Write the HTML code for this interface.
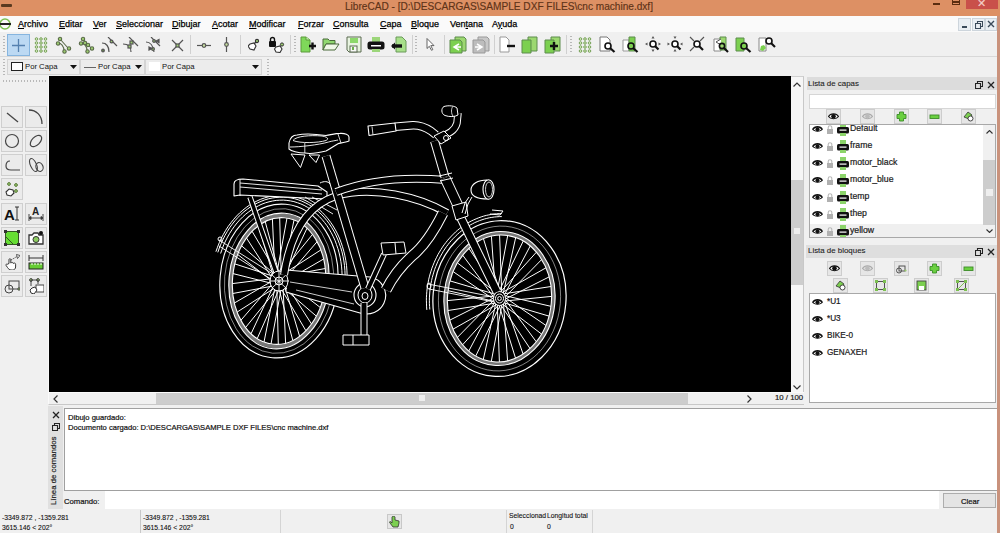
<!DOCTYPE html>
<html><head><meta charset="utf-8">
<style>
*{box-sizing:border-box;margin:0;padding:0}
html,body{width:1000px;height:533px;overflow:hidden;background:#f0f0f0;font-family:"Liberation Sans",sans-serif;color:#000}
.a{position:absolute}
.t{position:absolute;white-space:nowrap;line-height:1;-webkit-text-stroke:0.2px currentColor}
#title{left:0;top:0;width:1000px;height:16px;background:#dd9064}
#menubar{left:0;top:16px;width:997px;height:16px;background:#fafafa}
#tb1{left:0;top:32px;width:997px;height:25px;background:#f0f0f0;border-bottom:1px solid #d8d8d8}
#tb2{left:0;top:57px;width:997px;height:19px;background:#f0f0f0}
#lefttb{left:0;top:76px;width:48px;height:433px;background:#f0f0f0}
#canvas{left:49px;top:76px;width:742px;height:316px;background:#000;overflow:hidden}
#vscroll{left:791px;top:76px;width:13px;height:316px;background:#f6f6f6;border-right:1px solid #c8c8c8;border-top:1px solid #d0d0d0}
#hscroll{left:48px;top:392px;width:756px;height:13px;background:#f0f0f0;border-bottom:1px solid #c8c8c8;border-top:1px solid #fafafa;border-left:1px solid #fafafa}
#dock{left:806px;top:76px;width:191px;height:329px;background:#f0f0f0}
#cmd{left:48px;top:405px;width:949px;height:104px;background:#f0f0f0}
#status{left:0;top:509px;width:997px;height:24px;background:#f0f0f0}
#rborder{left:997px;top:16px;width:3px;height:517px;background:#c9927c}
.menu span{position:absolute;top:4px;font-size:9px;line-height:1;white-space:nowrap;color:#000;-webkit-text-stroke:0.25px #000}
.menu u{text-decoration:underline;text-underline-offset:1px}
.hd{position:absolute;width:2px;background-image:linear-gradient(#b8b8b8 50%,transparent 50%);background-size:2px 3px}
.sep{position:absolute;top:3px;width:1px;height:19px;background:#d0d0d0}
.ic{position:absolute}
.lb{position:absolute;width:22px;height:22px;background:#ebebeb;border:1px solid #cfcfcf}
.db{position:absolute;width:15px;height:15px;background:#e6e6e6;border:1px solid #cdcdcd}
</style></head><body>

<!-- title bar -->
<div id="title" class="a">
  <div class="a" style="left:1px;top:4px;width:11px;height:3px;background:#5a3a20;border-radius:1px"></div>
  <div class="t" style="left:345px;top:2px;font-size:10.1px;color:#5e3318;-webkit-text-stroke:0.15px #5e3318">LibreCAD - [D:\DESCARGAS\SAMPLE DXF FILES\cnc machine.dxf]</div>
  <div class="a" style="left:933px;top:3px;width:7px;height:2px;background:#5a2d10"></div>
  <div class="a" style="left:952px;top:-1px;width:8px;height:6px;border:1.5px solid #5a2d10;border-top:0"></div><div class="a" style="left:952px;top:1px;width:8px;height:1.5px;background:#5a2d10"></div>
  <div class="a" style="left:966px;top:0;width:32px;height:9px;background:#c9504a"></div>
  <div class="t" style="left:977px;top:-2px;font-size:11px;color:#f4d0c8">✕</div>
</div>

<!-- menu bar -->
<div id="menubar" class="a menu">
  <svg class="a" style="left:0;top:1px" width="12" height="14" viewBox="0 0 12 14"><circle cx="5" cy="7" r="5" fill="none" stroke="#7cc050" stroke-width="1.5"/><rect x="0" y="6" width="11" height="2" fill="#222"/></svg>
  <span style="left:18px"><u>A</u>rchivo</span>
  <span style="left:59px"><u>E</u>ditar</span>
  <span style="left:93px"><u>V</u>er</span>
  <span style="left:116px"><u>S</u>eleccionar</span>
  <span style="left:172px"><u>D</u>ibujar</span>
  <span style="left:212px"><u>A</u>cotar</span>
  <span style="left:249px"><u>M</u>odificar</span>
  <span style="left:298px"><u>F</u>orzar</span>
  <span style="left:333px"><u>C</u>onsulta</span>
  <span style="left:380px"><u>C</u>apa</span>
  <span style="left:411px"><u>B</u>loque</span>
  <span style="left:450px">Ven<u>t</u>ana</span>
  <span style="left:492px">A<u>y</u>uda</span>
  <div class="a" style="left:958px;top:2px;width:13px;height:13px;background:#e9eef3;border:1px solid #cdd5dc"></div>
  <div class="a" style="left:962px;top:10px;width:5px;height:2px;background:#3a4a5a"></div>
  <div class="a" style="left:972px;top:2px;width:13px;height:13px;background:#e9eef3;border:1px solid #cdd5dc"></div>
  <svg class="ic" style="left:975px;top:5px" width="8" height="8" viewBox="0 0 8 8"><path d="M2.5 0.5H7.5V5.5H5.5V2.5H2.5Z M0.5 2.5H5.5V7.5H0.5Z" fill="none" stroke="#3a4a5a" stroke-width="1.1"/></svg>
  <div class="a" style="left:985px;top:2px;width:12px;height:13px;background:#e9eef3;border:1px solid #cdd5dc"></div>
  <svg class="ic" style="left:987px;top:4px" width="8" height="8" viewBox="0 0 8 8"><path d="M1 1L7 7M7 1L1 7" stroke="#3a4a5a" stroke-width="1.4"/></svg>
</div>

<div id="tb1" class="a">
  <div class="hd" style="left:3px;top:4px;height:17px"></div>
  <div class="a" style="left:7px;top:2px;width:23px;height:22px;background:#bcd9f3;border:1px solid #86b5df"></div>
  <svg class="ic" style="left:10px;top:5px" width="17" height="17" viewBox="0 0 17 17"><path d="M8.5 2V15M2 8.5H15" stroke="#5581b0" stroke-width="1.3"/></svg>
  <svg class="ic" style="left:33px;top:4px" width="16" height="18" viewBox="0 0 16 18" fill="#d8eec0" stroke="#5f8f3f" stroke-width="0.8"><circle cx="3.5" cy="3" r="1.3"/><circle cx="8" cy="3" r="1.3"/><circle cx="12.5" cy="3" r="1.3"/><circle cx="3.5" cy="7" r="1.3"/><circle cx="8" cy="7" r="1.3"/><circle cx="12.5" cy="7" r="1.3"/><circle cx="3.5" cy="11" r="1.3"/><circle cx="8" cy="11" r="1.3"/><circle cx="12.5" cy="11" r="1.3"/><circle cx="3.5" cy="15" r="1.3"/><circle cx="8" cy="15" r="1.3"/><circle cx="12.5" cy="15" r="1.3"/></svg>
  <svg class="ic" style="left:55px;top:4px" width="18" height="18" viewBox="0 0 18 18" fill="#9ccc70" stroke="#5a6a4a" stroke-width="1.1"><path d="M5 3L13 12M3 7C6 7 9 10 9 15" fill="none"/><circle cx="5" cy="3" r="1.7"/><circle cx="3" cy="7.5" r="1.7"/><circle cx="14" cy="12.5" r="1.7"/><circle cx="9.5" cy="15.5" r="1.7"/></svg>
  <svg class="ic" style="left:78px;top:4px" width="18" height="18" viewBox="0 0 18 18" fill="#9ccc70" stroke="#5a6a4a" stroke-width="1.1"><path d="M5 3L13 12M3 7C6 7 9 10 9 15" fill="none"/><circle cx="5" cy="3" r="1.7"/><circle cx="3" cy="7.5" r="1.7"/><circle cx="7" cy="7" r="1.7"/><circle cx="10" cy="9" r="1.7"/><circle cx="14" cy="12.5" r="1.7"/><circle cx="9.5" cy="15.5" r="1.7"/></svg>
  <svg class="ic" style="left:101px;top:5px" width="18" height="17" viewBox="0 0 18 17" stroke="#555" stroke-width="1.2" fill="none"><path d="M7 0L16 9M1 6C5 6 8 9 8 15"/><circle cx="10.5" cy="4.5" r="1.4" fill="#9ccc70"/><circle cx="2" cy="13.5" r="1.3" fill="#6a8a50"/></svg>
  <svg class="ic" style="left:123px;top:5px" width="18" height="17" viewBox="0 0 18 17" stroke="#555" stroke-width="1.2" fill="none"><path d="M6 0L15 9M0 7C4 7 8 9 8 15"/><rect x="7" y="4" width="3" height="3" fill="#9ccc70"/><rect x="5" y="8" width="3" height="3" fill="#9ccc70"/></svg>
  <svg class="ic" style="left:146px;top:5px" width="18" height="17" viewBox="0 0 18 17" stroke="#555" stroke-width="1.2" fill="none"><path d="M5 0L14 9M0 5C4 5 7 8 8 15"/><circle cx="8" cy="4" r="1.3" fill="#9ccc70"/><circle cx="7" cy="12" r="1.4" fill="#9ccc70"/><path d="M10 4L13 2.5L13 5.5Z M3 10L6 11.5L3 13Z" fill="#444"/></svg>
  <svg class="ic" style="left:171px;top:7px" width="13" height="13" viewBox="0 0 13 13" stroke="#555" stroke-width="1.2" fill="none"><path d="M1 1L12 12M12 1L1 12"/><rect x="5" y="5" width="3" height="3" fill="#9ccc70"/></svg>
  <div class="sep" style="left:190px"></div>
  <svg class="ic" style="left:197px;top:10px" width="15" height="7" viewBox="0 0 15 7" stroke="#555" stroke-width="1.2" fill="none"><path d="M0 3.5H14"/><circle cx="7" cy="3.5" r="1.8" fill="#c8e0a0"/></svg>
  <svg class="ic" style="left:223px;top:5px" width="7" height="15" viewBox="0 0 7 15" stroke="#555" stroke-width="1.2" fill="none"><path d="M3.5 0V15"/><circle cx="3.5" cy="7.5" r="1.8" fill="#c8e0a0"/></svg>
  <div class="sep" style="left:240px"></div>
  <svg class="ic" style="left:248px;top:6px" width="12" height="13" viewBox="0 0 12 13" stroke="#333" stroke-width="1.1" fill="#fff"><path d="M2 6L6 5L8 8L6 12L2 11L0 8Z"/><circle cx="9" cy="3" r="1.6" fill="#9ccc70"/><path d="M6 6L8 4" fill="none"/></svg>
  <svg class="ic" style="left:268px;top:4px" width="17" height="17" viewBox="0 0 17 17"><rect x="1" y="5" width="7" height="6" rx="1" fill="#111"/><path d="M2.5 5V3.5A2 2 0 0 1 6.5 3.5V5" stroke="#111" stroke-width="1.4" fill="none"/><path d="M8 11L12 10L14 13L12 16.5L8 16L6.5 13Z" stroke="#333" stroke-width="1.1" fill="#fff"/><circle cx="14" cy="8.5" r="1.6" fill="#9ccc70" stroke="#333"/></svg>
  <div class="sep" style="left:290px"></div>
  <div class="hd" style="left:294px;top:4px;height:17px"></div>
  <svg class="ic" style="left:300px;top:4px" width="17" height="17" viewBox="0 0 17 17"><path d="M1 1H6L10 4V16H1Z" fill="#7fd85a" stroke="#5c9a3c"/><path d="M6 1V4H10" fill="#c8f0b0" stroke="#5c9a3c"/><path d="M9 10H16M12.5 6.5V13.5" stroke="#111" stroke-width="2.4"/></svg>
  <svg class="ic" style="left:322px;top:5px" width="18" height="15" viewBox="0 0 18 15"><path d="M1 2H6L7.5 3.5H13V7H4L1 13Z" fill="#90d870" stroke="#4a6a3a"/><path d="M1 13L4 7H17L13 13Z" fill="#f0f8e8" stroke="#4a6a3a"/></svg>
  <svg class="ic" style="left:346px;top:4px" width="16" height="17" viewBox="0 0 16 17"><path d="M1 1H15V16H3L1 14Z" fill="#e8f4e0" stroke="#5a6a50"/><rect x="4" y="2" width="8" height="5" fill="#8cd86a"/><rect x="4" y="10" width="7" height="6" fill="#f8f8f8" stroke="#5a6a50"/><rect x="6" y="11" width="2" height="3" fill="#6ab04a"/></svg>
  <svg class="ic" style="left:367px;top:4px" width="18" height="17" viewBox="0 0 18 17"><rect x="5" y="1" width="8" height="5" fill="#9cd67a"/><rect x="0.5" y="5.5" width="17" height="8" rx="2.5" fill="#111"/><rect x="4" y="9" width="10" height="1.5" fill="#fff"/><rect x="5" y="13" width="8" height="3" fill="#9cd67a"/></svg>
  <svg class="ic" style="left:390px;top:4px" width="17" height="17" viewBox="0 0 17 17"><path d="M6 1H12L16 5V16H6Z" fill="#a8e08a" stroke="#6a9a5a"/><path d="M2 10H12" stroke="#111" stroke-width="3.4"/><path d="M1 10L5 6.5V13.5Z" fill="#111"/></svg>
  <div class="sep" style="left:412px"></div>
  <div class="hd" style="left:415px;top:4px;height:17px"></div>
  <svg class="ic" style="left:426px;top:6px" width="9" height="13" viewBox="0 0 9 13"><path d="M1 0.5V10.5L3.3 8.3L5.5 12.3L6.8 11.6L4.8 7.6H8Z" fill="#fff" stroke="#555" stroke-width="0.9"/></svg>
  <div class="sep" style="left:444px"></div>
  <svg class="ic" style="left:449px;top:4px" width="18" height="18" viewBox="0 0 18 18"><path d="M6 1H15L17 3V15H6Z" fill="#9cd870" stroke="#5c8c4c"/><path d="M1 4H11L13 6V17H1Z" fill="#7cd050" stroke="#5c8c4c"/><path d="M10 8L5 11L10 14M5 11H12" stroke="#fff" stroke-width="1.5" fill="none"/></svg>
  <svg class="ic" style="left:472px;top:4px" width="18" height="18" viewBox="0 0 18 18"><path d="M6 1H15L17 3V15H6Z" fill="#c8c8c8" stroke="#999"/><path d="M1 4H11L13 6V17H1Z" fill="#bdbdbd" stroke="#999"/><path d="M5 8L10 11L5 14M3 11H10" stroke="#fff" stroke-width="1.5" fill="none"/></svg>
  <div class="sep" style="left:494px"></div>
  <svg class="ic" style="left:499px;top:4px" width="17" height="17" viewBox="0 0 17 17"><path d="M1 1H7L10 4V16H1Z" fill="#fff" stroke="#999"/><path d="M8 10H16" stroke="#111" stroke-width="2.4"/></svg>
  <svg class="ic" style="left:521px;top:4px" width="18" height="18" viewBox="0 0 18 18"><path d="M7 1H16V15H7Z" fill="#9cd870" stroke="#5c8c4c"/><path d="M1 4H10V17H1Z" fill="#7cd050" stroke="#5c8c4c"/></svg>
  <svg class="ic" style="left:544px;top:4px" width="18" height="18" viewBox="0 0 18 18"><path d="M7 1H16V15H7Z" fill="#9cd870" stroke="#5c8c4c"/><path d="M1 4H10V17H1Z" fill="#7cd050" stroke="#5c8c4c"/><path d="M6 10H14M10 6V14" stroke="#111" stroke-width="2.4"/></svg>
  <div class="sep" style="left:566px"></div>
  <div class="hd" style="left:570px;top:4px;height:17px"></div>
  <svg class="ic" style="left:577px;top:4px" width="16" height="18" viewBox="0 0 16 18" fill="#d8eec0" stroke="#5f8f3f" stroke-width="0.8"><circle cx="3.5" cy="3" r="1.3"/><circle cx="8" cy="3" r="1.3"/><circle cx="12.5" cy="3" r="1.3"/><circle cx="3.5" cy="7" r="1.3"/><circle cx="8" cy="7" r="1.3"/><circle cx="12.5" cy="7" r="1.3"/><circle cx="3.5" cy="11" r="1.3"/><circle cx="8" cy="11" r="1.3"/><circle cx="12.5" cy="11" r="1.3"/><circle cx="3.5" cy="15" r="1.3"/><circle cx="8" cy="15" r="1.3"/><circle cx="12.5" cy="15" r="1.3"/></svg>
  <svg class="ic" style="left:599px;top:4px" width="17" height="17" viewBox="0 0 17 17"><path d="M1 1H8L11 4V15H1Z" fill="#fff" stroke="#777"/><circle cx="9" cy="10" r="3" fill="#fff" stroke="#111" stroke-width="1.6"/><path d="M11 12L15.5 16" stroke="#111" stroke-width="2.2"/></svg>
  <svg class="ic" style="left:622px;top:4px" width="17" height="17" viewBox="0 0 17 17"><path d="M1 4H7V15H1Z" fill="#fff" stroke="#999"/><path d="M7 1H13V15H7Z" fill="#7cd050" stroke="#5c8c4c"/><circle cx="9" cy="10" r="3" fill="#7cd050" stroke="#111" stroke-width="1.6"/><path d="M11 12L15.5 16" stroke="#111" stroke-width="2.2"/></svg>
  <svg class="ic" style="left:645px;top:4px" width="17" height="17" viewBox="0 0 17 17"><circle cx="8" cy="8" r="3" fill="#fff" stroke="#111" stroke-width="1.6"/><path d="M10 10L13.5 13.5" stroke="#111" stroke-width="2.2"/><path d="M8 0L6.5 2.5H9.5Z M8 16L6.5 13.5H9.5Z M0 8L2.5 6.5V9.5Z M16 8L13.5 6.5V9.5Z" fill="#555"/></svg>
  <svg class="ic" style="left:667px;top:4px" width="17" height="17" viewBox="0 0 17 17"><circle cx="8" cy="8" r="3" fill="#fff" stroke="#111" stroke-width="1.6"/><path d="M10 10L13.5 13.5" stroke="#111" stroke-width="2.2"/><path d="M8 3L6.5 0.5H9.5Z M8 13L6.5 15.5H9.5Z M3 8L0.5 6.5V9.5Z M13 8L15.5 6.5V9.5Z" fill="#555"/></svg>
  <svg class="ic" style="left:689px;top:4px" width="17" height="17" viewBox="0 0 17 17"><circle cx="8" cy="8" r="3" fill="#fff" stroke="#111" stroke-width="1.6"/><path d="M10 10L14 14" stroke="#111" stroke-width="2.2"/><path d="M1 1L5 5M15 1L11 5M1 15L5 11" stroke="#555" stroke-width="1.1"/></svg>
  <svg class="ic" style="left:712px;top:4px" width="18" height="17" viewBox="0 0 18 17"><path d="M2 3H9V15H2Z" fill="#fff" stroke="#888"/><path d="M8 1H14V14H8Z" fill="#9cd870" stroke="#5c8c4c"/><path d="M9 3L4 6L9 9" fill="#fff" stroke="#555"/><circle cx="10" cy="10" r="2.6" fill="#9cd870" stroke="#111" stroke-width="1.6"/><path d="M12 12L16 16" stroke="#111" stroke-width="2.2"/></svg>
  <svg class="ic" style="left:735px;top:4px" width="17" height="17" viewBox="0 0 17 17"><path d="M1 2H9V15H1Z" fill="#7cd050" stroke="#5c8c4c"/><circle cx="9" cy="10" r="3" fill="#7cd050" stroke="#111" stroke-width="1.6"/><path d="M11 12L15.5 16" stroke="#111" stroke-width="2.2"/></svg>
  <svg class="ic" style="left:758px;top:3px" width="18" height="18" viewBox="0 0 18 18"><path d="M1 3H8V16H1Z" fill="#fff" stroke="#888"/><circle cx="11" cy="6" r="3" fill="#fff" stroke="#111" stroke-width="1.6"/><path d="M13 8L17 12" stroke="#111" stroke-width="2.2"/><path d="M3 11L6 10L8 13L5 16L2 15Z" fill="#7cd050"/></svg>
</div>
<div id="tb2" class="a">
  <div class="hd" style="left:3px;top:2px;height:16px"></div>
  <div class="a" style="left:7px;top:2px;width:73px;height:16px;background:#ececec;border:1px solid #d4d4d4"></div>
  <div class="a" style="left:11px;top:5px;width:12px;height:9px;background:#fff;border:1px solid #222"></div>
  <div class="t" style="left:25px;top:6px;font-size:7.7px;color:#111;-webkit-text-stroke:0">Por Capa</div>
  <svg class="ic" style="left:70px;top:8px" width="7" height="4" viewBox="0 0 7 4"><path d="M0 0H7L3.5 4Z" fill="#111"/></svg>
  <div class="a" style="left:80px;top:2px;width:65px;height:16px;background:#ececec;border:1px solid #d4d4d4"></div>
  <div class="a" style="left:84px;top:10px;width:12px;height:1px;background:#666"></div>
  <div class="t" style="left:98px;top:6px;font-size:7.7px;color:#111;-webkit-text-stroke:0">Por Capa</div>
  <svg class="ic" style="left:135px;top:8px" width="7" height="4" viewBox="0 0 7 4"><path d="M0 0H7L3.5 4Z" fill="#111"/></svg>
  <div class="a" style="left:145px;top:2px;width:117px;height:16px;background:#ececec;border:1px solid #d4d4d4"></div>
  <div class="a" style="left:149px;top:5px;width:11px;height:9px;background:#fff"></div>
  <div class="t" style="left:162px;top:6px;font-size:7.7px;color:#111;-webkit-text-stroke:0">Por Capa</div>
  <svg class="ic" style="left:252px;top:8px" width="7" height="4" viewBox="0 0 7 4"><path d="M0 0H7L3.5 4Z" fill="#111"/></svg>
  <div class="hd" style="left:267px;top:2px;height:16px"></div>
</div>
<div id="lefttb" class="a"><div class="hd" style="left:3px;top:4px;width:44px;height:2px;background-image:linear-gradient(90deg,#b8b8b8 50%,transparent 50%);background-size:3px 2px"></div><div class="lb" style="left:1px;top:30px"></div><svg class="ic" style="left:4px;top:33px" width="16" height="16" viewBox="0 0 16 16"><path d="M3 4L14 13" stroke="#444" stroke-width="1.3"/></svg><div class="lb" style="left:25px;top:30px"></div><svg class="ic" style="left:28px;top:33px" width="16" height="16" viewBox="0 0 16 16"><path d="M1 1C8 1 14 6 14 15" stroke="#444" stroke-width="1.3" fill="none"/></svg><div class="lb" style="left:1px;top:54px"></div><svg class="ic" style="left:4px;top:57px" width="16" height="16" viewBox="0 0 16 16"><circle cx="8" cy="8" r="6.5" stroke="#444" stroke-width="1.2" fill="none"/></svg><div class="lb" style="left:25px;top:54px"></div><svg class="ic" style="left:28px;top:57px" width="16" height="16" viewBox="0 0 16 16"><ellipse cx="8" cy="8" rx="7" ry="4" transform="rotate(-45 8 8)" stroke="#444" stroke-width="1.2" fill="none"/></svg><div class="lb" style="left:1px;top:78px"></div><svg class="ic" style="left:4px;top:81px" width="16" height="16" viewBox="0 0 16 16"><path d="M6 4C3 4 2 6 2 9C2 12 4 13 7 13H16" stroke="#444" stroke-width="1.2" fill="none"/></svg><div class="lb" style="left:25px;top:78px"></div><svg class="ic" style="left:28px;top:81px" width="16" height="16" viewBox="0 0 16 16"><ellipse cx="5.5" cy="8" rx="3" ry="7" transform="rotate(-25 5.5 8)" stroke="#444" stroke-width="1.1" fill="none"/><ellipse cx="11.5" cy="10" rx="3.5" ry="4.5" transform="rotate(-20 11.5 10)" stroke="#444" stroke-width="1.1" fill="none"/></svg><div class="lb" style="left:1px;top:102px"></div><svg class="ic" style="left:4px;top:105px" width="16" height="16" viewBox="0 0 16 16"><circle cx="5" cy="3" r="1.4" fill="#9ccc70" stroke="#5a7a3a"/><circle cx="12" cy="4" r="1.4" fill="#9ccc70" stroke="#5a7a3a"/><circle cx="12" cy="10" r="1.4" fill="#9ccc70" stroke="#5a7a3a"/><path d="M5 8L9 9L10 12L7 15L3 14L2 11Z" fill="#fff" stroke="#333" stroke-width="1.1"/></svg><div class="lb" style="left:1px;top:127px"></div><svg class="ic" style="left:4px;top:130px" width="16" height="16" viewBox="0 0 16 16"><text x="0" y="14" font-family="Liberation Sans" font-weight="bold" font-size="15" fill="#111">A</text><path d="M11 1H15M13 1V14M11 14H15" stroke="#333" stroke-width="1"/></svg><div class="lb" style="left:25px;top:127px"></div><svg class="ic" style="left:28px;top:130px" width="16" height="16" viewBox="0 0 16 16"><text x="4" y="9" font-family="Liberation Sans" font-weight="bold" font-size="10" fill="#222">A</text><path d="M1 8V15M15 8V15M1 12H15M1 12L3 10.5V13.5ZM15 12L13 10.5V13.5Z" stroke="#444" stroke-width="1"/></svg><div class="lb" style="left:1px;top:151px"></div><svg class="ic" style="left:4px;top:154px" width="16" height="16" viewBox="0 0 16 16"><rect x="1.5" y="1.5" width="13" height="13" fill="#66dd33" stroke="#335522"/><path d="M1 6L10 15" stroke="#335522"/><rect x="0" y="0" width="3" height="3" fill="#333"/><rect x="13" y="0" width="3" height="3" fill="#333"/><rect x="0" y="13" width="3" height="3" fill="#333"/><rect x="13" y="13" width="3" height="3" fill="#333"/></svg><div class="lb" style="left:25px;top:151px"></div><svg class="ic" style="left:28px;top:154px" width="16" height="16" viewBox="0 0 16 16"><path d="M1 5H4L6 3H10L11 5H15V14H1Z" fill="#fff" stroke="#333" stroke-width="1.3"/><circle cx="8" cy="9.5" r="3" fill="#8ccc60" stroke="#333"/><circle cx="13" cy="3" r="2" fill="#111"/></svg><div class="lb" style="left:1px;top:175px"></div><svg class="ic" style="left:4px;top:178px" width="16" height="16" viewBox="0 0 16 16"><path d="M5 9.5V5.5C5 4.5 6.8 4.5 6.8 5.5V9L7.5 8.6C8.3 8.2 9.2 8.6 9.2 9.4L10 9.1C10.8 8.8 11.6 9.4 11.6 10.2V13C11.6 15 10 16 8.5 16H7C5.5 16 4.5 15 3.5 13.5L2 11.3C1.6 10.6 2.4 9.8 3.2 10.3Z" fill="#fff" stroke="#333" stroke-width="1"/><path d="M7 6L13 2.5" stroke="#555" stroke-dasharray="1.5 1"/><path d="M12.5 0.5L16 1.5L13.5 4.5Z" fill="#fff" stroke="#333" stroke-width=".8"/></svg><div class="lb" style="left:25px;top:175px"></div><svg class="ic" style="left:28px;top:178px" width="16" height="16" viewBox="0 0 16 16"><path d="M1 1V7M15 1V7M1 4H15" stroke="#333"/><rect x="1" y="9" width="14" height="6" fill="#66cc33" stroke="#222"/><path d="M4 9V11M7 9V11M10 9V11M13 9V11" stroke="#fff"/></svg><div class="lb" style="left:1px;top:199px"></div><svg class="ic" style="left:4px;top:202px" width="16" height="16" viewBox="0 0 16 16"><rect x="5" y="3" width="10" height="8" fill="none" stroke="#444"/><circle cx="5" cy="11" r="4" fill="none" stroke="#444"/><circle cx="15" cy="11" r="1.2" fill="#9ccc70" stroke="#444"/></svg><div class="lb" style="left:25px;top:199px"></div><svg class="ic" style="left:28px;top:202px" width="16" height="16" viewBox="0 0 16 16"><circle cx="3" cy="2" r="1.4" fill="#9ccc70" stroke="#444"/><circle cx="10" cy="2" r="1.4" fill="#9ccc70" stroke="#444"/><path d="M3 2V8M3 2H10V6" stroke="#444" fill="none"/><rect x="8" y="7" width="8" height="7" fill="#fff" stroke="#444"/><path d="M4 10L7 9L9 12L6 16L3 15L2 12Z" fill="#fff" stroke="#333"/></svg></div>
<div class="a" style="left:48px;top:76px;width:1px;height:316px;background:#f8f8f8"></div><div id="canvas" class="a"><svg width="742" height="316" viewBox="49 76 742 316"><!--BIKE--><g stroke="#fff" fill="none" stroke-linejoin="round"><ellipse cx="279" cy="281" rx="59" ry="77" transform="rotate(5 279 281)" stroke-width="1.1" fill="none"/><ellipse cx="279" cy="281" rx="54.5" ry="72.5" transform="rotate(5 279 281)" stroke-width="0.5" fill="none"/><ellipse cx="279" cy="281" rx="48.25" ry="65.75" transform="rotate(5 279 281)" stroke="#777" stroke-width="3.5" fill="none"/><ellipse cx="279" cy="281" rx="50" ry="68" transform="rotate(5 279 281)" stroke-width="1.1" fill="none"/><ellipse cx="279" cy="281" rx="46.5" ry="63.5" transform="rotate(5 279 281)" stroke-width="1.1" fill="none"/><path d="M285.0 281.4L323.6 259.0M284.9 282.5L311.5 324.0M284.6 283.5L325.6 278.4M284.2 284.5L299.6 336.3M283.7 285.4L323.2 298.1M283.0 286.2L285.6 343.2M282.3 286.9L316.3 316.1M281.4 287.4L271.0 344.0M280.6 287.8L305.9 330.7M279.6 288.0L257.2 338.6M278.7 288.0L292.8 340.4M277.8 287.8L245.5 327.6M276.8 287.5L278.3 344.3M276.0 287.1L237.1 312.1M275.2 286.4L264.0 342.0M274.5 285.7L232.8 293.5M274.0 284.8L251.0 333.8M273.5 283.8L233.0 273.6M273.2 282.8L240.9 320.3M273.0 281.7L237.7 254.5M273.0 280.6L234.4 303.0M273.1 279.5L246.5 238.0M273.4 278.5L232.4 283.6M273.8 277.5L258.4 225.7M274.3 276.6L234.8 263.9M275.0 275.8L272.4 218.8M275.7 275.1L241.7 245.9M276.6 274.6L287.0 218.0M277.4 274.2L252.1 231.3M278.4 274.0L300.8 223.4M279.3 274.0L265.2 221.6M280.2 274.2L312.5 234.4M281.2 274.5L279.7 217.7M282.0 274.9L320.9 249.9M282.8 275.6L294.0 220.0M283.5 276.3L325.2 268.5M284.0 277.2L307.0 228.2M284.5 278.2L325.0 288.4M284.8 279.2L317.1 241.7M285.0 280.3L320.3 307.5" stroke-width="1.0" fill="none" /><ellipse cx="279" cy="281" rx="6" ry="7" transform="rotate(0 279 281)" stroke-width="1" fill="#000"/><ellipse cx="279" cy="281" rx="4" ry="4.5" transform="rotate(0 279 281)" stroke-width="1" fill="none"/><ellipse cx="279" cy="281" rx="1.8" ry="2" transform="rotate(0 279 281)" stroke-width="1" fill="none"/><path d="M220.6 253.5 L222.1 249.2 L223.7 245.0 L225.5 241.0 L227.5 237.1 L229.7 233.3 L232.0 229.7 L234.5 226.2 L237.1 222.9 L239.8 219.8 L242.7 216.9 L245.7 214.2 L248.8 211.8 L252.0 209.5 L255.3 207.5 L258.6 205.7 L262.0 204.1 L265.5 202.8 L269.0 201.8 L272.6 201.0 L276.2 200.4 L279.7 200.2 L283.3 200.1 L286.9 200.4 L290.4 200.9 L293.9 201.6 L297.4 202.7 L300.8 203.9 L304.1 205.4 L307.3 207.2 L310.5 209.2 L313.6 211.4 L316.5 213.9 L319.3 216.5 L322.0 219.4 L324.6 222.5 L327.0 225.7 L329.2 229.2 L331.3 232.8 L333.2 236.5 L335.0 240.4 L336.5 244.5 L337.9 248.6 L339.1 252.9 L340.1 257.2 L340.9 261.6 L341.5 266.1 L341.9 270.6 L342.1 275.2" stroke-width="1" fill="none" /><path d="M217.8 252.4 L219.3 248.0 L221.1 243.7 L223.0 239.5 L225.0 235.4 L227.3 231.5 L229.7 227.7 L232.3 224.1 L235.0 220.7 L237.9 217.5 L240.9 214.5 L244.0 211.7 L247.3 209.2 L250.6 206.8 L254.1 204.7 L257.6 202.9 L261.2 201.3 L264.8 199.9 L268.5 198.8 L272.2 198.0 L275.9 197.5 L279.7 197.2 L283.4 197.1 L287.2 197.4 L290.9 197.9 L294.6 198.7 L298.2 199.8 L301.7 201.1 L305.2 202.7 L308.6 204.5 L311.9 206.6 L315.1 208.9 L318.2 211.4 L321.2 214.2 L324.0 217.2 L326.7 220.3 L329.2 223.7 L331.6 227.3 L333.8 231.0 L335.8 234.9 L337.6 239.0 L339.2 243.2 L340.7 247.5 L342.0 251.9 L343.0 256.4 L343.9 261.0 L344.5 265.6 L344.9 270.3 L345.1 275.1" stroke-width="1" fill="none" /><path d="M215.9 251.7 L217.5 247.2 L219.3 242.7 L221.2 238.4 L223.4 234.3 L225.7 230.3 L228.2 226.4 L230.9 222.8 L233.7 219.3 L236.6 216.0 L239.7 212.9 L242.9 210.1 L246.3 207.4 L249.7 205.0 L253.3 202.9 L256.9 201.0 L260.6 199.3 L264.3 198.0 L268.1 196.9 L272.0 196.0 L275.8 195.5 L279.7 195.2 L283.5 195.2 L287.4 195.4 L291.2 195.9 L295.0 196.8 L298.7 197.8 L302.4 199.2 L306.0 200.8 L309.5 202.7 L312.9 204.8 L316.2 207.2 L319.4 209.8 L322.4 212.6 L325.3 215.7 L328.1 218.9 L330.7 222.4 L333.1 226.0 L335.4 229.9 L337.5 233.9 L339.4 238.0 L341.0 242.3 L342.5 246.7 L343.8 251.2 L344.9 255.8 L345.8 260.5 L346.5 265.3 L346.9 270.1 L347.1 274.9" stroke-width="1" fill="none" /><path d="M219 240 L276 276 M219 246 L274 281" stroke-width="0.9" fill="none" /><ellipse cx="220" cy="239" rx="2" ry="2" transform="rotate(0 220 239)" stroke-width="1" fill="none"/><path d="M234 184 C234 180 238 179 243 179 L318 186 L327 192 L327 199 L240 195 L234 196 Z" stroke-width="1.1" fill="#000" /><path d="M240 183 L322 190 M240 187 L322 194 M240 179 L240 196" stroke-width="0.9" fill="none" /><path d="M250 197 L276 272" stroke-width="5.5" stroke-linecap="butt"/><path d="M250 197 L276 272" stroke-width="3.5" stroke="#000" stroke-linecap="butt"/><path d="M305 197 L333 214 M312 197 L337 210" stroke-width="0.9" fill="none" /><path d="M286 270 L370 277 C382 279 389 292 384 303 C380 312 370 316 360 313 L300 296 L286 292 Z" stroke-width="1.1" fill="#000" /><path d="M290 282 L352 292 M296 290 L354 304" stroke-width="0.8" fill="none" /><ellipse cx="279" cy="281" rx="9" ry="10" transform="rotate(0 279 281)" stroke-width="1" fill="#000"/><path d="M271 274 L287 289 M272 288 L288 273 M279 271 V291 M269 281 H289" stroke-width="0.9" fill="none" /><ellipse cx="279" cy="281" rx="4" ry="4" transform="rotate(0 279 281)" stroke-width="1" fill="none"/><ellipse cx="365" cy="295" rx="11" ry="12" transform="rotate(0 365 295)" stroke-width="1.1" fill="#000"/><ellipse cx="365" cy="295" rx="7" ry="8" transform="rotate(0 365 295)" stroke-width="1" fill="none"/><ellipse cx="365" cy="296" rx="3" ry="3.5" transform="rotate(0 365 296)" stroke-width="1" fill="none"/><path d="M447 213 C420 197 372 185 336 196 C306 206 290 235 284 275" stroke-width="8.0" stroke-linecap="butt"/><path d="M447 213 C420 197 372 185 336 196 C306 206 290 235 284 275" stroke-width="6" stroke="#000" stroke-linecap="butt"/><path d="M326 156 L365 288" stroke-width="9.0" stroke-linecap="butt"/><path d="M326 156 L365 288" stroke-width="7" stroke="#000" stroke-linecap="butt"/><path d="M320 183 C324 181 328 181 330 184" stroke-width="1" fill="none" /><path d="M336 192 C365 181 400 176 446 180" stroke-width="8.0" stroke-linecap="butt"/><path d="M336 192 C365 181 400 176 446 180" stroke-width="6" stroke="#000" stroke-linecap="butt"/><path d="M443 213 C432 235 422 248 412 256 C400 267 392 278 386 290" stroke-width="11.0" stroke-linecap="butt"/><path d="M443 213 C432 235 422 248 412 256 C400 267 392 278 386 290" stroke-width="9" stroke="#000" stroke-linecap="butt"/><path d="M368 289 L384 254" stroke-width="6.0" stroke-linecap="butt"/><path d="M368 289 L384 254" stroke-width="4" stroke="#000" stroke-linecap="butt"/><path d="M381 243 L404 242 L406 253 L383 255 Z M395 243 L396 254" stroke-width="1" fill="#000" /><path d="M364 303 L364 337" stroke-width="7.0" stroke-linecap="butt"/><path d="M364 303 L364 337" stroke-width="5" stroke="#000" stroke-linecap="butt"/><path d="M343 335 L369 335 L369 345 L343 345 Z M353 335 L353 345" stroke-width="1" fill="#000" /><ellipse cx="499.5" cy="298.5" rx="66.5" ry="78" transform="rotate(5 499.5 298.5)" stroke-width="1.2" fill="none"/><ellipse cx="499.5" cy="298.5" rx="61.0" ry="72.5" transform="rotate(5 499.5 298.5)" stroke-width="0.5" fill="none"/><ellipse cx="499.5" cy="298.5" rx="53.75" ry="65.25" transform="rotate(5 499.5 298.5)" stroke="#777" stroke-width="3.5" fill="none"/><ellipse cx="499.5" cy="298.5" rx="55.5" ry="67" transform="rotate(5 499.5 298.5)" stroke-width="1.1" fill="none"/><ellipse cx="499.5" cy="298.5" rx="52" ry="63.5" transform="rotate(5 499.5 298.5)" stroke-width="1.1" fill="none"/><path d="M505.5 298.9L549.1 276.9M505.4 300.0L536.3 341.8M505.1 301.0L551.6 296.4M504.7 302.0L523.1 354.0M504.2 302.9L549.0 316.1M503.5 303.7L507.6 360.8M502.8 304.4L541.6 334.1M501.9 304.9L491.3 361.4M501.1 305.3L530.0 348.5M500.1 305.5L475.8 355.9M499.2 305.5L515.5 358.1M498.3 305.3L462.6 344.8M497.3 305.0L499.4 361.9M496.5 304.6L453.0 329.2M495.7 303.9L483.3 359.4M495.0 303.2L448.0 310.5M494.5 302.3L468.8 351.0M494.0 301.3L448.1 290.7M493.7 300.3L457.3 337.5M493.5 299.2L453.1 271.6M493.5 298.1L449.9 320.1M493.6 297.0L462.7 255.2M493.9 296.0L447.4 300.6M494.3 295.0L475.9 243.0M494.8 294.1L450.0 280.9M495.5 293.3L491.4 236.2M496.2 292.6L457.4 262.9M497.1 292.1L507.7 235.6M497.9 291.7L469.0 248.5M498.9 291.5L523.2 241.1M499.8 291.5L483.5 238.9M500.7 291.7L536.4 252.2M501.7 292.0L499.6 235.1M502.5 292.4L546.0 267.8M503.3 293.1L515.7 237.6M504.0 293.8L551.0 286.5M504.5 294.7L530.2 246.0M505.0 295.7L550.9 306.3M505.3 296.7L541.7 259.5M505.5 297.8L545.9 325.4" stroke-width="1.0" fill="none" /><ellipse cx="499.5" cy="298.5" rx="6" ry="7" transform="rotate(0 499.5 298.5)" stroke-width="1" fill="#000"/><ellipse cx="499.5" cy="298.5" rx="4" ry="4.5" transform="rotate(0 499.5 298.5)" stroke-width="1" fill="none"/><ellipse cx="499.5" cy="298.5" rx="1.8" ry="2" transform="rotate(0 499.5 298.5)" stroke-width="1" fill="none"/><path d="M429.8 309.5 L429.6 306.6 L429.4 303.7 L429.4 300.8 L429.4 297.9 L429.6 295.0 L429.8 292.0 L430.1 289.1 L430.5 286.2 L431.0 283.4 L431.6 280.5 L432.2 277.7 L433.0 274.9 L433.8 272.1 L434.7 269.3 L435.7 266.6 L436.8 264.0 L437.9 261.3 L439.2 258.8 L440.5 256.2 L441.9 253.8 L443.3 251.3 L444.8 249.0 L446.4 246.7 L448.1 244.5 L449.8 242.3 L451.6 240.2 L453.5 238.2 L455.4 236.3 L457.4 234.4 L459.4 232.6 L461.5 230.9 L463.6 229.3 L465.8 227.8 L468.0 226.4 L470.2 225.0 L472.5 223.8 L474.8 222.6 L477.2 221.6 L479.6 220.6 L482.0 219.8 L484.4 219.0 L486.8 218.4 L489.3 217.8 L491.8 217.4 L494.3 217.0 L496.8 216.8 L499.3 216.6 L501.8 216.6" stroke-width="1" fill="none" /><path d="M426.8 309.9 L426.6 306.9 L426.5 303.9 L426.4 300.8 L426.4 297.8 L426.6 294.8 L426.8 291.8 L427.1 288.8 L427.5 285.8 L428.1 282.8 L428.6 279.8 L429.3 276.9 L430.1 274.0 L431.0 271.1 L431.9 268.2 L433.0 265.4 L434.1 262.7 L435.3 259.9 L436.6 257.3 L437.9 254.7 L439.4 252.1 L440.9 249.6 L442.5 247.1 L444.1 244.8 L445.9 242.5 L447.7 240.2 L449.6 238.1 L451.5 236.0 L453.5 234.0 L455.5 232.0 L457.6 230.2 L459.8 228.4 L462.0 226.8 L464.3 225.2 L466.6 223.7 L468.9 222.3 L471.3 221.0 L473.7 219.9 L476.2 218.8 L478.7 217.8 L481.2 216.9 L483.7 216.1 L486.3 215.4 L488.8 214.9 L491.4 214.4 L494.0 214.0 L496.6 213.8 L499.2 213.6 L501.8 213.6" stroke-width="1" fill="none" /><path d="M490 214 L500 215 L503 211 L492 210" stroke-width="1" fill="none" /><path d="M428 284 L494 297 M429 289 L494 302" stroke-width="0.9" fill="none" /><ellipse cx="429" cy="286" rx="2" ry="3" transform="rotate(0 429 286)" stroke-width="1" fill="none"/><path d="M459 214 L497 292" stroke-width="9.0" stroke-linecap="butt"/><path d="M459 214 L497 292" stroke-width="7" stroke="#000" stroke-linecap="butt"/><path d="M434.5 141 L445 177" stroke-width="9.0" stroke-linecap="butt"/><path d="M434.5 141 L445 177" stroke-width="7" stroke="#000" stroke-linecap="butt"/><path d="M445 178 L459.5 209" stroke-width="11.0" stroke-linecap="butt"/><path d="M445 178 L459.5 209" stroke-width="9" stroke="#000" stroke-linecap="butt"/><path d="M439 176 L452 173 M440 181 L453 178" stroke-width="1" fill="none" /><path d="M452 206 L466 202 L468 216 L456 220 Z" stroke-width="1" fill="#000" /><path d="M395 126.8 L413 125.2 C420 125 425 127 431 131 L436 135" stroke-width="8.5" stroke-linecap="butt"/><path d="M395 126.8 L413 125.2 C420 125 425 127 431 131 L436 135" stroke-width="6.5" stroke="#000" stroke-linecap="butt"/><path d="M368 126 L395 123 L396 131 L369 135.5 Z" stroke-width="1.1" fill="#000" /><path d="M372 126.5 L373 135" stroke-width="0.8" fill="none" /><path d="M440 137 C448 134 455 131 457 123 L458 113" stroke-width="7.5" stroke-linecap="butt"/><path d="M440 137 C448 134 455 131 457 123 L458 113" stroke-width="5.5" stroke="#000" stroke-linecap="butt"/><path d="M444 106.5 C449 105 455 106 457 108 L458 115 C455 117 449 117 445 115.5 C441 114 441 108 444 106.5 Z" stroke-width="1" fill="#000" /><path d="M453 106.5 C451 108 451 114 453 116" stroke-width="0.8" fill="none" /><path d="M434 136 L444 131 L451 138 L441 144 Z" stroke-width="1" fill="#000" /><ellipse cx="446" cy="138" rx="2.5" ry="2.5" transform="rotate(0 446 138)" stroke-width="1" fill="none"/><path d="M465 214 L468 204 L472 197 M462 213 L465 203 L469 197" stroke-width="1" fill="none" /><path d="M471 190 C471 184 478 180 487 180 L488 199 C478 199 471 196 471 190 Z" stroke-width="1.1" fill="#000" /><ellipse cx="488.5" cy="189.5" rx="5.5" ry="9.8" transform="rotate(0 488.5 189.5)" stroke-width="1.1" fill="#000"/><ellipse cx="489" cy="189.5" rx="3.5" ry="7.5" transform="rotate(0 489 189.5)" stroke-width="0.8" fill="none"/><path d="M291 154 L300.5 167.5 L305 155 Z M309 155 L316 162.5 L319.5 155 Z" stroke-width="1" fill="none" /><path d="M289 143 C290 138 293 135 297 135 C306 133 316 134 326 135.5 C332 134.5 336 133.5 340 133.4 C345 133 349 135 349 137 L349 141 C346 142 341 143 338 143.7 C334 146 330 149 326 151 C318 153 310 154 305 153 C298 153 291 151 289 149 Z" stroke-width="1.1" fill="#000" /><path d="M293 140.5 C296 136 310 135 322 136 C328 137 329 139 326 140.5 C318 143 300 143.5 293 140.5 Z" stroke-width="0.9" fill="none" /><path d="M290 147 C300 147 318 145 328.5 142 C332 141 336 140.5 338 140" stroke-width="0.9" fill="none" /><path d="M304.8 143 V153 M338 134 L341 143" stroke-width="0.8" fill="none" /></g><!--/BIKE--></svg></div>
<div id="vscroll" class="a">
  <svg class="ic" style="left:2px;top:5px" width="8" height="5" viewBox="0 0 8 5"><path d="M0.5 4.5L4 1L7.5 4.5" stroke="#333" fill="none" stroke-width="1.2"/></svg>
  <div class="a" style="left:0;top:103px;width:12px;height:105px;background:#cdcdcd"></div>
  <div class="a" style="left:3px;top:151px;width:6px;height:6px;background:#eee"></div>
  <svg class="ic" style="left:2px;top:308px" width="8" height="5" viewBox="0 0 8 5"><path d="M0.5 0.5L4 4L7.5 0.5" stroke="#333" fill="none" stroke-width="1.2"/></svg>
</div>
<div id="hscroll" class="a">
  <svg class="ic" style="left:4px;top:2px" width="5" height="8" viewBox="0 0 5 8"><path d="M4.5 0.5L1 4L4.5 7.5" stroke="#333" fill="none" stroke-width="1.2"/></svg>
  <div class="a" style="left:107px;top:0;width:532px;height:11px;background:#cdcdcd"></div>
  <div class="a" style="left:370px;top:2px;width:6px;height:6px;background:#eee"></div>
  <svg class="ic" style="left:698px;top:2px" width="5" height="8" viewBox="0 0 5 8"><path d="M0.5 0.5L4 4L0.5 7.5" stroke="#333" fill="none" stroke-width="1.2"/></svg>
  <div class="t" style="left:726px;top:1px;font-size:7.8px;color:#222">10 / 100</div>
</div>
<div id="dock" class="a"><div class="a" style="left:1px;top:1px;width:190px;height:13px;background:#dcdcdc"></div><div class="t" style="left:2px;top:4px;font-size:7.9px;color:#222;-webkit-text-stroke:0.1px #222">Lista de capas</div><svg class="ic" style="left:169px;top:5px" width="8" height="8" viewBox="0 0 8 8"><path d="M2.5 0.5H7.5V5.5H5.5V2.5H2.5Z M0.5 2.5H5.5V7.5H0.5Z" fill="none" stroke="#222" stroke-width="1.1"/></svg><svg class="ic" style="left:181px;top:5px" width="8" height="8" viewBox="0 0 8 8"><path d="M1 1L7 7M7 1L1 7" stroke="#222" stroke-width="1.3"/></svg><div class="a" style="left:3px;top:18px;width:187px;height:15px;background:#fff;border:1px solid #d6d6d6"></div><div class="db" style="left:20px;top:33px"></div><svg class="ic" style="left:22px;top:35px" width="11" height="11" viewBox="0 0 11 11"><path d="M0.5 5.5C2.5 2 8.5 2 10.5 5.5C8.5 8.5 2.5 8.5 0.5 5.5Z" fill="#fff" stroke="#111" stroke-width="1.1"/><circle cx="5.5" cy="5.3" r="2.3" fill="#111"/></svg><div class="db" style="left:54px;top:33px"></div><svg class="ic" style="left:56px;top:35px" width="11" height="11" viewBox="0 0 11 11"><path d="M0.5 5.5C2.5 2 8.5 2 10.5 5.5C8.5 8.5 2.5 8.5 0.5 5.5Z" fill="#ddd" stroke="#aaa" stroke-width="1.1"/><circle cx="5.5" cy="5.3" r="2.3" fill="#bbb"/></svg><div class="db" style="left:88px;top:33px"></div><svg class="ic" style="left:90px;top:35px" width="11" height="11" viewBox="0 0 11 11"><path d="M3.5 1H7.5V3.5H10V7.5H7.5V10H3.5V7.5H1V3.5H3.5Z" fill="#6ad040" stroke="#3c8c28" stroke-width=".9"/></svg><div class="db" style="left:121px;top:33px"></div><svg class="ic" style="left:123px;top:35px" width="11" height="11" viewBox="0 0 11 11"><rect x="1" y="4" width="9" height="3.5" fill="#6ad040" stroke="#3c8c28" stroke-width=".9"/></svg><div class="db" style="left:155px;top:33px"></div><svg class="ic" style="left:157px;top:35px" width="11" height="11" viewBox="0 0 11 11"><path d="M1 6L5 1L9 4L6 8Z" fill="#7cd050" stroke="#333" stroke-width=".8"/><circle cx="7.5" cy="7.5" r="2.5" fill="#fff" stroke="#333" stroke-width=".9"/></svg><div class="a" style="left:3px;top:48px;width:187px;height:114px;background:#fff;border:1px solid #a8a8a8;overflow:hidden"><svg class="ic" style="left:2px;top:0px" width="11" height="8" viewBox="0 0 11 8"><path d="M0 4.2C2 0 9 0 11 4.2C9 7.5 2 7.5 0 4.2Z" fill="#111"/><path d="M1.6 4.4C3.5 2.3 7.5 2.3 9.4 4.4C7.5 6.3 3.5 6.3 1.6 4.4Z" fill="#fff"/><circle cx="5.5" cy="4.3" r="2" fill="#111"/></svg><svg class="ic" style="left:17px;top:0px" width="6" height="9" viewBox="0 0 6 9"><rect x="0" y="4" width="6" height="5" fill="#b0b0b0"/><path d="M1.2 4V2.5A1.8 1.8 0 0 1 4.8 2.5V4" stroke="#b8b8b8" stroke-width="1.1" fill="none"/></svg><svg class="ic" style="left:27px;top:-2px" width="12" height="13" viewBox="0 0 12 13"><rect x="3" y="0" width="6" height="4" fill="#8cd46a"/><rect x="0" y="4" width="12" height="6.5" rx="1.5" fill="#111"/><rect x="2.5" y="6.5" width="7" height="1.2" fill="#fff"/><rect x="3" y="10" width="6" height="3" fill="#8cd46a"/></svg><div class="t" style="left:40px;top:-1px;font-size:8.7px;color:#1a1a1a">Default</div><svg class="ic" style="left:2px;top:17px" width="11" height="8" viewBox="0 0 11 8"><path d="M0 4.2C2 0 9 0 11 4.2C9 7.5 2 7.5 0 4.2Z" fill="#111"/><path d="M1.6 4.4C3.5 2.3 7.5 2.3 9.4 4.4C7.5 6.3 3.5 6.3 1.6 4.4Z" fill="#fff"/><circle cx="5.5" cy="4.3" r="2" fill="#111"/></svg><svg class="ic" style="left:17px;top:17px" width="6" height="9" viewBox="0 0 6 9"><rect x="0" y="4" width="6" height="5" fill="#b0b0b0"/><path d="M1.2 4V2.5A1.8 1.8 0 0 1 4.8 2.5V4" stroke="#b8b8b8" stroke-width="1.1" fill="none"/></svg><svg class="ic" style="left:27px;top:15px" width="12" height="13" viewBox="0 0 12 13"><rect x="3" y="0" width="6" height="4" fill="#8cd46a"/><rect x="0" y="4" width="12" height="6.5" rx="1.5" fill="#111"/><rect x="2.5" y="6.5" width="7" height="1.2" fill="#fff"/><rect x="3" y="10" width="6" height="3" fill="#8cd46a"/></svg><div class="t" style="left:40px;top:16px;font-size:8.7px;color:#1a1a1a">frame</div><svg class="ic" style="left:2px;top:34px" width="11" height="8" viewBox="0 0 11 8"><path d="M0 4.2C2 0 9 0 11 4.2C9 7.5 2 7.5 0 4.2Z" fill="#111"/><path d="M1.6 4.4C3.5 2.3 7.5 2.3 9.4 4.4C7.5 6.3 3.5 6.3 1.6 4.4Z" fill="#fff"/><circle cx="5.5" cy="4.3" r="2" fill="#111"/></svg><svg class="ic" style="left:17px;top:34px" width="6" height="9" viewBox="0 0 6 9"><rect x="0" y="4" width="6" height="5" fill="#b0b0b0"/><path d="M1.2 4V2.5A1.8 1.8 0 0 1 4.8 2.5V4" stroke="#b8b8b8" stroke-width="1.1" fill="none"/></svg><svg class="ic" style="left:27px;top:32px" width="12" height="13" viewBox="0 0 12 13"><rect x="3" y="0" width="6" height="4" fill="#8cd46a"/><rect x="0" y="4" width="12" height="6.5" rx="1.5" fill="#111"/><rect x="2.5" y="6.5" width="7" height="1.2" fill="#fff"/><rect x="3" y="10" width="6" height="3" fill="#8cd46a"/></svg><div class="t" style="left:40px;top:33px;font-size:8.7px;color:#1a1a1a">motor_black</div><svg class="ic" style="left:2px;top:51px" width="11" height="8" viewBox="0 0 11 8"><path d="M0 4.2C2 0 9 0 11 4.2C9 7.5 2 7.5 0 4.2Z" fill="#111"/><path d="M1.6 4.4C3.5 2.3 7.5 2.3 9.4 4.4C7.5 6.3 3.5 6.3 1.6 4.4Z" fill="#fff"/><circle cx="5.5" cy="4.3" r="2" fill="#111"/></svg><svg class="ic" style="left:17px;top:51px" width="6" height="9" viewBox="0 0 6 9"><rect x="0" y="4" width="6" height="5" fill="#b0b0b0"/><path d="M1.2 4V2.5A1.8 1.8 0 0 1 4.8 2.5V4" stroke="#b8b8b8" stroke-width="1.1" fill="none"/></svg><svg class="ic" style="left:27px;top:49px" width="12" height="13" viewBox="0 0 12 13"><rect x="3" y="0" width="6" height="4" fill="#8cd46a"/><rect x="0" y="4" width="12" height="6.5" rx="1.5" fill="#111"/><rect x="2.5" y="6.5" width="7" height="1.2" fill="#fff"/><rect x="3" y="10" width="6" height="3" fill="#8cd46a"/></svg><div class="t" style="left:40px;top:50px;font-size:8.7px;color:#1a1a1a">motor_blue</div><svg class="ic" style="left:2px;top:68px" width="11" height="8" viewBox="0 0 11 8"><path d="M0 4.2C2 0 9 0 11 4.2C9 7.5 2 7.5 0 4.2Z" fill="#111"/><path d="M1.6 4.4C3.5 2.3 7.5 2.3 9.4 4.4C7.5 6.3 3.5 6.3 1.6 4.4Z" fill="#fff"/><circle cx="5.5" cy="4.3" r="2" fill="#111"/></svg><svg class="ic" style="left:17px;top:68px" width="6" height="9" viewBox="0 0 6 9"><rect x="0" y="4" width="6" height="5" fill="#b0b0b0"/><path d="M1.2 4V2.5A1.8 1.8 0 0 1 4.8 2.5V4" stroke="#b8b8b8" stroke-width="1.1" fill="none"/></svg><svg class="ic" style="left:27px;top:66px" width="12" height="13" viewBox="0 0 12 13"><rect x="3" y="0" width="6" height="4" fill="#8cd46a"/><rect x="0" y="4" width="12" height="6.5" rx="1.5" fill="#111"/><rect x="2.5" y="6.5" width="7" height="1.2" fill="#fff"/><rect x="3" y="10" width="6" height="3" fill="#8cd46a"/></svg><div class="t" style="left:40px;top:67px;font-size:8.7px;color:#1a1a1a">temp</div><svg class="ic" style="left:2px;top:85px" width="11" height="8" viewBox="0 0 11 8"><path d="M0 4.2C2 0 9 0 11 4.2C9 7.5 2 7.5 0 4.2Z" fill="#111"/><path d="M1.6 4.4C3.5 2.3 7.5 2.3 9.4 4.4C7.5 6.3 3.5 6.3 1.6 4.4Z" fill="#fff"/><circle cx="5.5" cy="4.3" r="2" fill="#111"/></svg><svg class="ic" style="left:17px;top:85px" width="6" height="9" viewBox="0 0 6 9"><rect x="0" y="4" width="6" height="5" fill="#b0b0b0"/><path d="M1.2 4V2.5A1.8 1.8 0 0 1 4.8 2.5V4" stroke="#b8b8b8" stroke-width="1.1" fill="none"/></svg><svg class="ic" style="left:27px;top:83px" width="12" height="13" viewBox="0 0 12 13"><rect x="3" y="0" width="6" height="4" fill="#8cd46a"/><rect x="0" y="4" width="12" height="6.5" rx="1.5" fill="#111"/><rect x="2.5" y="6.5" width="7" height="1.2" fill="#fff"/><rect x="3" y="10" width="6" height="3" fill="#8cd46a"/></svg><div class="t" style="left:40px;top:84px;font-size:8.7px;color:#1a1a1a">thep</div><div class="a" style="left:0;top:99px;width:174px;height:17px;background:#efefef"></div><svg class="ic" style="left:2px;top:102px" width="11" height="8" viewBox="0 0 11 8"><path d="M0 4.2C2 0 9 0 11 4.2C9 7.5 2 7.5 0 4.2Z" fill="#111"/><path d="M1.6 4.4C3.5 2.3 7.5 2.3 9.4 4.4C7.5 6.3 3.5 6.3 1.6 4.4Z" fill="#fff"/><circle cx="5.5" cy="4.3" r="2" fill="#111"/></svg><svg class="ic" style="left:17px;top:102px" width="6" height="9" viewBox="0 0 6 9"><rect x="0" y="4" width="6" height="5" fill="#b0b0b0"/><path d="M1.2 4V2.5A1.8 1.8 0 0 1 4.8 2.5V4" stroke="#b8b8b8" stroke-width="1.1" fill="none"/></svg><svg class="ic" style="left:27px;top:100px" width="12" height="13" viewBox="0 0 12 13"><rect x="3" y="0" width="6" height="4" fill="#8cd46a"/><rect x="0" y="4" width="12" height="6.5" rx="1.5" fill="#111"/><rect x="2.5" y="6.5" width="7" height="1.2" fill="#fff"/><rect x="3" y="10" width="6" height="3" fill="#8cd46a"/></svg><div class="t" style="left:40px;top:101px;font-size:8.7px;color:#1a1a1a">yellow</div><div class="a" style="left:173px;top:0;width:13px;height:112px;background:#f0f0f0"></div><div class="a" style="left:173px;top:35px;width:13px;height:65px;background:#cdcdcd"></div><div class="a" style="left:176px;top:64px;width:7px;height:7px;background:#eee"></div><svg class="ic" style="left:176px;top:5px" width="7" height="4" viewBox="0 0 7 4"><path d="M0.5 3.5L3.5 0.5L6.5 3.5" stroke="#333" fill="none" stroke-width="1.1"/></svg><svg class="ic" style="left:176px;top:104px" width="7" height="4" viewBox="0 0 7 4"><path d="M0.5 0.5L3.5 3.5L6.5 0.5" stroke="#333" fill="none" stroke-width="1.1"/></svg></div><div class="a" style="left:0;top:169px;width:191px;height:13px;background:#dedede"></div><div class="t" style="left:2px;top:171px;font-size:7.9px;color:#222;-webkit-text-stroke:0.1px #222">Lista de bloques</div><svg class="ic" style="left:169px;top:172px" width="8" height="8" viewBox="0 0 8 8"><path d="M2.5 0.5H7.5V5.5H5.5V2.5H2.5Z M0.5 2.5H5.5V7.5H0.5Z" fill="none" stroke="#222" stroke-width="1.1"/></svg><svg class="ic" style="left:181px;top:172px" width="8" height="8" viewBox="0 0 8 8"><path d="M1 1L7 7M7 1L1 7" stroke="#222" stroke-width="1.3"/></svg><div class="db" style="left:21px;top:185px"></div><svg class="ic" style="left:23px;top:187px" width="11" height="11" viewBox="0 0 11 11"><path d="M0.5 5.5C2.5 2 8.5 2 10.5 5.5C8.5 8.5 2.5 8.5 0.5 5.5Z" fill="#fff" stroke="#111" stroke-width="1.1"/><circle cx="5.5" cy="5.3" r="2.3" fill="#111"/></svg><div class="db" style="left:54px;top:185px"></div><svg class="ic" style="left:56px;top:187px" width="11" height="11" viewBox="0 0 11 11"><path d="M0.5 5.5C2.5 2 8.5 2 10.5 5.5C8.5 8.5 2.5 8.5 0.5 5.5Z" fill="#ddd" stroke="#aaa" stroke-width="1.1"/><circle cx="5.5" cy="5.3" r="2.3" fill="#bbb"/></svg><div class="db" style="left:88px;top:185px"></div><svg class="ic" style="left:90px;top:187px" width="11" height="11" viewBox="0 0 11 11"><circle cx="3" cy="7.5" r="2.5" fill="none" stroke="#444" stroke-width=".9"/><rect x="3" y="3" width="6" height="5" fill="none" stroke="#444" stroke-width=".9"/><circle cx="9.5" cy="7.5" r="1.1" fill="#9ccc70"/></svg><div class="db" style="left:121px;top:185px"></div><svg class="ic" style="left:123px;top:187px" width="11" height="11" viewBox="0 0 11 11"><path d="M3.5 1H7.5V3.5H10V7.5H7.5V10H3.5V7.5H1V3.5H3.5Z" fill="#6ad040" stroke="#3c8c28" stroke-width=".9"/></svg><div class="db" style="left:155px;top:185px"></div><svg class="ic" style="left:157px;top:187px" width="11" height="11" viewBox="0 0 11 11"><rect x="1" y="4" width="9" height="3.5" fill="#6ad040" stroke="#3c8c28" stroke-width=".9"/></svg><div class="db" style="left:27px;top:202px"></div><svg class="ic" style="left:29px;top:204px" width="11" height="11" viewBox="0 0 11 11"><path d="M1 6L5 1L9 4L6 8Z" fill="#7cd050" stroke="#333" stroke-width=".8"/><circle cx="7.5" cy="7.5" r="2.5" fill="#fff" stroke="#333" stroke-width=".9"/></svg><div class="db" style="left:67px;top:202px"></div><svg class="ic" style="left:69px;top:204px" width="11" height="11" viewBox="0 0 11 11"><rect x="1.5" y="1.5" width="8" height="8" fill="none" stroke="#444" stroke-width=".9"/><rect x="0" y="0" width="3" height="3" fill="#7cc050"/><rect x="8" y="0" width="3" height="3" fill="#7cc050"/><rect x="0" y="8" width="3" height="3" fill="#7cc050"/><rect x="8" y="8" width="3" height="3" fill="#7cc050"/></svg><div class="db" style="left:108px;top:202px"></div><svg class="ic" style="left:110px;top:204px" width="11" height="11" viewBox="0 0 11 11"><rect x="1" y="1" width="9" height="9" fill="#7cd050" stroke="#444" stroke-width=".9"/><rect x="3" y="6" width="5" height="4" fill="#fff"/></svg><div class="db" style="left:148px;top:202px"></div><svg class="ic" style="left:150px;top:204px" width="11" height="11" viewBox="0 0 11 11"><rect x="1.5" y="1.5" width="8" height="8" fill="none" stroke="#444" stroke-width=".9"/><rect x="0" y="0" width="3" height="3" fill="#7cc050"/><rect x="8" y="0" width="3" height="3" fill="#7cc050"/><rect x="0" y="8" width="3" height="3" fill="#7cc050"/><rect x="8" y="8" width="3" height="3" fill="#7cc050"/><path d="M2 9L9 2" stroke="#7cc050"/></svg><div class="a" style="left:3px;top:217px;width:187px;height:110px;background:#fff;border:1px solid #a8a8a8"><svg class="ic" style="left:2px;top:4px" width="11" height="8" viewBox="0 0 11 8"><path d="M0 4.2C2 0 9 0 11 4.2C9 7.5 2 7.5 0 4.2Z" fill="#111"/><path d="M1.6 4.4C3.5 2.3 7.5 2.3 9.4 4.4C7.5 6.3 3.5 6.3 1.6 4.4Z" fill="#fff"/><circle cx="5.5" cy="4.3" r="2" fill="#111"/></svg><div class="t" style="left:17px;top:4px;font-size:8.2px;color:#1a1a1a">*U1</div><svg class="ic" style="left:2px;top:21px" width="11" height="8" viewBox="0 0 11 8"><path d="M0 4.2C2 0 9 0 11 4.2C9 7.5 2 7.5 0 4.2Z" fill="#111"/><path d="M1.6 4.4C3.5 2.3 7.5 2.3 9.4 4.4C7.5 6.3 3.5 6.3 1.6 4.4Z" fill="#fff"/><circle cx="5.5" cy="4.3" r="2" fill="#111"/></svg><div class="t" style="left:17px;top:21px;font-size:8.2px;color:#1a1a1a">*U3</div><svg class="ic" style="left:2px;top:38px" width="11" height="8" viewBox="0 0 11 8"><path d="M0 4.2C2 0 9 0 11 4.2C9 7.5 2 7.5 0 4.2Z" fill="#111"/><path d="M1.6 4.4C3.5 2.3 7.5 2.3 9.4 4.4C7.5 6.3 3.5 6.3 1.6 4.4Z" fill="#fff"/><circle cx="5.5" cy="4.3" r="2" fill="#111"/></svg><div class="t" style="left:17px;top:38px;font-size:8.2px;color:#1a1a1a">BIKE-0</div><svg class="ic" style="left:2px;top:55px" width="11" height="8" viewBox="0 0 11 8"><path d="M0 4.2C2 0 9 0 11 4.2C9 7.5 2 7.5 0 4.2Z" fill="#111"/><path d="M1.6 4.4C3.5 2.3 7.5 2.3 9.4 4.4C7.5 6.3 3.5 6.3 1.6 4.4Z" fill="#fff"/><circle cx="5.5" cy="4.3" r="2" fill="#111"/></svg><div class="t" style="left:17px;top:55px;font-size:8.2px;color:#1a1a1a">GENAXEH</div></div></div>
<div id="cmd" class="a">
  <div class="a" style="left:0;top:1px;width:15px;height:103px;background:#e0e0e0"></div>
  <svg class="ic" style="left:4px;top:6px" width="8" height="8" viewBox="0 0 8 8"><path d="M1 1L7 7M7 1L1 7" stroke="#222" stroke-width="1.3"/></svg>
  <svg class="ic" style="left:4px;top:18px" width="8" height="8" viewBox="0 0 8 8"><path d="M2.5 0.5H7.5V5.5H5.5V2.5H2.5Z M0.5 2.5H5.5V7.5H0.5Z" fill="none" stroke="#222" stroke-width="1.1"/></svg>
  <div class="t" style="left:2px;top:100px;font-size:7.8px;color:#222;transform-origin:0 0;transform:rotate(-90deg)">Línea de comandos</div>
  <div class="a" style="left:16px;top:3px;width:933px;height:83px;background:#fff;border:1px solid #a0a0a0;border-width:1px 0 1px 1px"></div>
  <div class="t" style="left:20px;top:8px;font-size:7.6px;color:#111;line-height:10px">Dibujo guardado:<br>Documento cargado: D:\DESCARGAS\SAMPLE DXF FILES\cnc machine.dxf</div>
  <div class="t" style="left:16px;top:93px;font-size:7.7px;color:#111">Comando:</div>
  <div class="a" style="left:57px;top:86px;width:834px;height:18px;background:#fff"></div>
  <div class="a" style="left:895px;top:88px;width:53px;height:15px;background:#e4e4e4;border:1px solid #adadad"></div>
  <div class="t" style="left:913px;top:93px;font-size:7.7px;color:#111">Clear</div>
</div>
<div id="status" class="a">
  <div class="t" style="left:2px;top:4px;font-size:6.8px;color:#111;line-height:10px;-webkit-text-stroke:0.1px #111">-3349.872 , -1359.281<br>3615.146 &lt; 202°</div>
  <div class="a" style="left:140px;top:1px;width:1px;height:23px;background:#c8c8c8"></div>
  <div class="t" style="left:143px;top:4px;font-size:6.8px;color:#111;line-height:10px;-webkit-text-stroke:0.1px #111">-3349.872 , -1359.281<br>3615.146 &lt; 202°</div>
  <div class="a" style="left:280px;top:1px;width:1px;height:23px;background:#d4d4d4"></div>
  <div class="a" style="left:387px;top:5px;width:15px;height:15px;background:#e6e6e6;border:1px solid #c8c8c8"></div>
  <svg class="ic" style="left:389px;top:7px" width="11" height="12" viewBox="0 0 11 12"><path d="M3 1V7L2 6C1 5 0 6 1 7L4 11H9L10 7V5L8 4.5L6 4V1C6 0 3 0 3 1Z" fill="#7cd050" stroke="#333" stroke-width=".8"/></svg>
  <div class="a" style="left:506px;top:1px;width:1px;height:23px;background:#d4d4d4"></div>
  <div class="t" style="left:509px;top:4px;font-size:6.8px;color:#111;-webkit-text-stroke:0.1px #111">Seleccionad</div>
  <div class="t" style="left:547px;top:4px;font-size:6.8px;color:#111;-webkit-text-stroke:0.1px #111">Longitud total</div>
  <div class="t" style="left:510px;top:15px;font-size:6.8px;color:#111;-webkit-text-stroke:0.1px #111">0</div>
  <div class="t" style="left:547px;top:15px;font-size:6.8px;color:#111;-webkit-text-stroke:0.1px #111">0</div>
  <div class="a" style="left:592px;top:1px;width:1px;height:23px;background:#d4d4d4"></div>
</div>
<div id="rborder" class="a"></div>

</body></html>
